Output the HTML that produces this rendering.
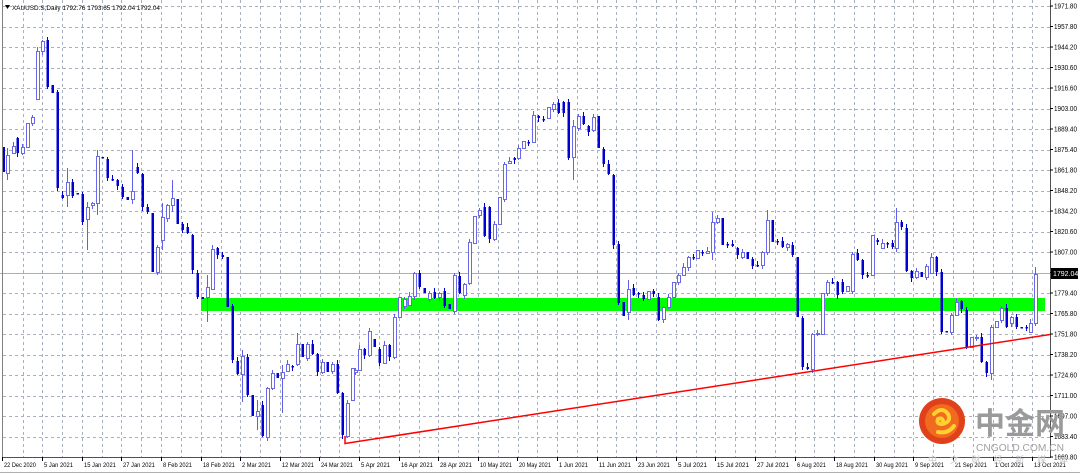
<!DOCTYPE html>
<html><head><meta charset="utf-8">
<style>
html,body{margin:0;padding:0;background:#fff;width:1080px;height:475px;overflow:hidden;font-family:"Liberation Sans","Noto Sans CJK SC",sans-serif;}
svg{position:absolute;left:0;top:0}
</style></head><body>
<svg id="c" width="1080" height="475" xmlns="http://www.w3.org/2000/svg">
<rect width="1080" height="475" fill="#fff"/>
<g id="grid" stroke="#a8b0c0" stroke-width="1" stroke-dasharray="3,3"></g>
<rect x="201" y="298" width="844" height="13" fill="#00ff00"/>
<line x1="0" y1="273.5" x2="1050" y2="273.5" stroke="#a8b0bc" stroke-width="1"/>
<g id="candles"></g>
<polyline points="345,436 345,443.5 1050,334.5" fill="none" stroke="#ff0000" stroke-width="1.5"/>
<line x1="2.5" y1="0" x2="2.5" y2="457" stroke="#808080"/>
<line x1="1050.5" y1="0" x2="1050.5" y2="458" stroke="#505050"/>
<line x1="2" y1="457.5" x2="1051" y2="457.5" stroke="#505050"/>
<line x1="0" y1="472.5" x2="1080" y2="472.5" stroke="#b0b0b0"/>
<g id="ylab" font-size="7" fill="#000"></g>
<g id="xlab" font-size="6.5" fill="#000"></g>
<rect x="1051" y="268" width="27" height="11" fill="#000"/>
<text x="1053" y="276" font-size="7" fill="#fff">1792.04</text>
<polygon points="5,5 10,5 7.5,9" fill="#000"/>
<text x="12" y="10" font-size="6.5" fill="#000" textLength="148" lengthAdjust="spacingAndGlyphs">XAUUSD.S,Daily  1792.76 1793.65 1792.04 1792.04</text>
<!-- watermark -->
<circle cx="942" cy="421" r="23" fill="#e0401a"/>
<circle cx="942" cy="421" r="17" fill="#f06a20"/>
<path d="M934 414 q8 -8 14 0 q4 8 -6 10 q-6 0 -4 -5 q4 -2 5 2 M938 432 q10 2 16 -6" fill="none" stroke="#ffd030" stroke-width="4" stroke-linecap="round"/>
<text x="975" y="434" font-size="30" font-weight="bold" fill="#9a9a9a" textLength="90" lengthAdjust="spacingAndGlyphs" font-family="'Noto Sans CJK SC',sans-serif">中金网</text>
<text x="976" y="451" font-size="10" fill="#a0a0a0" textLength="88" lengthAdjust="spacingAndGlyphs">CNGOLD.COM.CN</text>
<text x="928" y="463" font-size="9" fill="#c8c8c8" textLength="140" lengthAdjust="spacing" font-family="'Noto Sans CJK SC',sans-serif">中文财经新媒体</text>
</svg>
<script>
var NS="http://www.w3.org/2000/svg";
function el(t,a,p){var e=document.createElementNS(NS,t);for(var k in a)e.setAttribute(k,a[k]);p.appendChild(e);return e;}
var g=document.getElementById('grid');
for(var x=22.5;x<1050;x+=19.8){var xx=Math.round(x)+0.5;el('line',{x1:xx,y1:0,x2:xx,y2:457},g);}
for(var i=0;i<23;i++){var y=Math.round(6+i*20.5)+0.5;el('line',{x1:3,y1:y,x2:1050,y2:y},g);}
var yl=document.getElementById('ylab');
var labs=["1971.80","1957.80","1944.20","1930.60","1916.60","1903.00","1889.40","1875.40","1861.80","1848.20","1834.20","1820.60","1807.00","","1779.40","1765.80","1751.80","1738.20","1724.60","1711.00","1697.00","1683.40","1669.80"];
for(var i=0;i<23;i++){var y=6+i*20.5;el('line',{x1:1050,y1:y,x2:1053,y2:y,stroke:'#000'},yl);if(labs[i]){var t=el('text',{x:1054,y:y+2.5,textLength:23,lengthAdjust:'spacingAndGlyphs'},yl);t.textContent=labs[i];}}
var xl=document.getElementById('xlab');
var dates=["22 Dec 2020","5 Jan 2021","15 Jan 2021","27 Jan 2021","8 Feb 2021","18 Feb 2021","2 Mar 2021","12 Mar 2021","24 Mar 2021","5 Apr 2021","16 Apr 2021","28 Apr 2021","10 May 2021","20 May 2021","1 Jun 2021","11 Jun 2021","23 Jun 2021","5 Jul 2021","15 Jul 2021","27 Jul 2021","6 Aug 2021","18 Aug 2021","30 Aug 2021","9 Sep 2021","21 Sep 2021","1 Oct 2021","13 Oct 2021"];
for(var i=0;i<dates.length;i++){var x=i==0?2:Math.round(2.5+i*39.6);el('line',{x1:x+0.5,y1:457,x2:x+0.5,y2:461,stroke:'#000'},xl);var t=el('text',{x:x+2,y:467,textLength:dates[i].length*2.9,lengthAdjust:'spacingAndGlyphs'},xl);t.textContent=dates[i];}
var d=[[3,147,172,0],[7,155,173,1],[13,146,153,1],[17,138,153,0],[22,147,153,1],[27,123,147,1],[32,117,123,1],[37,51,99,1],[42,41,51,1],[47,40,87,0],[52,85,93,0],[57,92,188,0],[62,195,198,0],[67,182,195,1],[72,182,196,0],[77,193,194,0],[82,194,222,0],[87,207,219,1],[92,203,205,1],[97,156,203,1],[102,157,158,0],[107,159,178,0],[112,179,180,0],[117,180,186,0],[122,187,197,0],[127,197,200,0],[132,191,199,1],[137,167,173,0],[142,174,207,0],[147,207,212,0],[152,213,272,0],[157,247,272,1],[162,217,240,1],[167,205,218,1],[172,198,205,1],[177,199,224,0],[182,224,230,0],[187,227,233,0],[192,235,270,0],[197,273,297,0],[202,297,299,0],[207,287,297,1],[212,249,289,1],[217,248,255,0],[222,255,257,0],[227,257,307,0],[232,306,360,0],[237,361,374,0],[242,356,374,1],[247,357,395,0],[252,395,416,0],[257,411,416,1],[262,405,436,0],[267,388,437,1],[272,373,388,1],[277,373,378,0],[282,372,378,1],[287,364,371,1],[292,366,367,0],[297,344,364,1],[302,344,357,0],[307,344,358,1],[312,344,354,0],[317,354,372,0],[322,362,372,1],[327,362,372,0],[332,364,371,1],[337,364,393,0],[342,393,435,0],[347,403,436,1],[352,368,400,1],[355,370,372,1],[359,349,370,1],[364,349,355,0],[369,331,355,1],[374,339,347,0],[379,349,363,0],[384,345,363,1],[389,345,357,0],[394,317,357,1],[399,297,317,1],[404,299,306,1],[409,296,305,1],[414,273,296,1],[419,273,287,0],[424,288,293,0],[429,293,299,1],[434,292,298,0],[439,293,297,1],[444,291,306,0],[449,304,309,0],[454,275,311,1],[459,276,293,0],[464,284,295,1],[469,242,283,1],[474,216,243,1],[479,210,215,1],[484,207,236,0],[489,207,239,0],[494,224,239,1],[499,197,224,1],[504,164,199,1],[509,161,163,1],[514,158,160,0],[518,148,158,1],[523,141,148,1],[528,142,143,0],[533,115,142,1],[538,116,118,0],[543,119,120,0],[548,107,118,1],[553,104,109,1],[558,103,113,0],[563,102,113,0],[568,102,158,0],[573,126,157,1],[578,116,128,1],[583,116,124,0],[588,126,132,0],[593,117,130,1],[598,116,148,0],[603,149,164,0],[608,164,174,0],[613,175,245,0],[618,244,303,0],[623,302,316,0],[628,289,312,1],[633,288,295,0],[638,293,294,0],[643,295,299,0],[648,291,299,1],[653,291,294,0],[658,297,320,0],[663,307,319,1],[668,297,307,1],[673,282,297,1],[678,275,282,1],[683,267,275,1],[688,257,267,1],[693,257,258,0],[697,250,258,1],[702,252,253,0],[707,251,253,1],[712,222,252,1],[717,218,222,1],[722,218,245,0],[727,244,245,0],[732,244,246,0],[737,248,255,0],[742,252,257,1],[747,252,259,0],[752,259,266,0],[757,265,266,0],[762,252,265,1],[767,220,252,1],[772,220,242,0],[777,241,242,0],[782,241,247,0],[787,244,247,1],[792,245,255,0],[797,257,317,0],[802,318,367,0],[807,367,369,0],[812,334,369,1],[817,333,334,1],[822,293,334,1],[827,282,293,1],[832,282,283,0],[837,282,295,0],[842,282,292,0],[847,286,291,1],[852,254,291,1],[857,253,260,0],[862,260,275,0],[867,275,276,0],[872,235,275,1],[877,240,242,0],[882,243,248,1],[887,243,244,0],[892,243,247,0],[896,222,248,1],[901,222,227,0],[906,228,271,0],[911,271,278,0],[916,271,277,1],[921,272,277,0],[926,266,277,1],[931,257,273,1],[936,257,272,0],[941,272,332,0],[946,331,332,0],[951,315,332,1],[956,302,315,1],[961,301,309,0],[966,310,347,0],[971,337,347,1],[976,337,338,1],[981,337,362,0],[986,362,373,0],[991,327,373,1],[996,321,327,1],[1001,308,320,1],[1006,308,327,0],[1011,317,323,1],[1016,317,327,0],[1021,327,328,0],[1026,327,328,0],[1030,323,332,1],[1035,274,323,1]];
var cg=document.getElementById('candles');
var wick={7:[148,180],67:[168,207],87:[202,250],97:[150,215],132:[150,204],162:[203,250],172:[180,212],207:[275,322],242:[350,402],257:[400,430],282:[365,413],297:[333,366],573:[120,180],628:[280,320],1035:[267,326],991:[325,380],896:[208,252],767:[210,255],712:[212,260]};
for(var i=0;i<d.length;i++){var c=d[i],x=c[0],t=c[1],b=c[2],up=c[3];
 var w=wick[x]||[t-(i*7%5),b+(i*3%5)];
 if(up){el('line',{x1:x+0.5,y1:w[0],x2:x+0.5,y2:w[1],stroke:'#6060e8'},cg);
  el('rect',{x:x-0.5,y:t+0.5,width:3,height:Math.max(1,b-t),fill:'#fff',stroke:'#6a6ae8','stroke-width':1},cg);}
 else{el('line',{x1:x+0.5,y1:w[0],x2:x+0.5,y2:w[1],stroke:'#0000d0'},cg);
  el('rect',{x:x-0.5,y:t,width:2.5,height:Math.max(1.5,b-t),fill:'#0000d0'},cg);}
}
</script>
</body></html>
